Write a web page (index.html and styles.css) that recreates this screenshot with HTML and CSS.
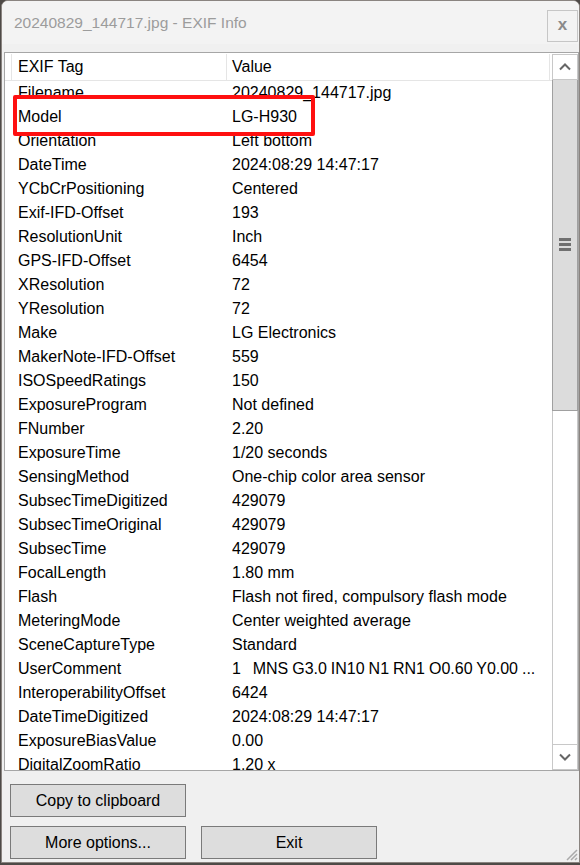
FILE: index.html
```html
<!DOCTYPE html>
<html>
<head>
<meta charset="utf-8">
<link rel="stylesheet" href="styles.css">
</head>
<body>
<div class="window">
  <div class="titlebar">
    <div class="title">20240829_144717.jpg - EXIF Info</div>
    <div class="close">x</div>
  </div>
  <div class="content">
    <div class="list">
      <div class="listmain">
        <div class="header">
          <div class="hc tag">EXIF Tag</div>
          <div class="hc val">Value</div>
          <div class="hc rest"></div>
        </div>
        <div class="rows">
          <div class="row"><span class="c1">Filename</span><span class="c2">20240829_144717.jpg</span></div>
          <div class="row"><span class="c1">Model</span><span class="c2">LG-H930</span></div>
          <div class="row"><span class="c1">Orientation</span><span class="c2">Left bottom</span></div>
          <div class="row"><span class="c1">DateTime</span><span class="c2">2024:08:29 14:47:17</span></div>
          <div class="row"><span class="c1">YCbCrPositioning</span><span class="c2">Centered</span></div>
          <div class="row"><span class="c1">Exif-IFD-Offset</span><span class="c2">193</span></div>
          <div class="row"><span class="c1">ResolutionUnit</span><span class="c2">Inch</span></div>
          <div class="row"><span class="c1">GPS-IFD-Offset</span><span class="c2">6454</span></div>
          <div class="row"><span class="c1">XResolution</span><span class="c2">72</span></div>
          <div class="row"><span class="c1">YResolution</span><span class="c2">72</span></div>
          <div class="row"><span class="c1">Make</span><span class="c2">LG Electronics</span></div>
          <div class="row"><span class="c1">MakerNote-IFD-Offset</span><span class="c2">559</span></div>
          <div class="row"><span class="c1">ISOSpeedRatings</span><span class="c2">150</span></div>
          <div class="row"><span class="c1">ExposureProgram</span><span class="c2">Not defined</span></div>
          <div class="row"><span class="c1">FNumber</span><span class="c2">2.20</span></div>
          <div class="row"><span class="c1">ExposureTime</span><span class="c2">1/20 seconds</span></div>
          <div class="row"><span class="c1">SensingMethod</span><span class="c2">One-chip color area sensor</span></div>
          <div class="row"><span class="c1">SubsecTimeDigitized</span><span class="c2">429079</span></div>
          <div class="row"><span class="c1">SubsecTimeOriginal</span><span class="c2">429079</span></div>
          <div class="row"><span class="c1">SubsecTime</span><span class="c2">429079</span></div>
          <div class="row"><span class="c1">FocalLength</span><span class="c2">1.80 mm</span></div>
          <div class="row"><span class="c1">Flash</span><span class="c2">Flash not fired, compulsory flash mode</span></div>
          <div class="row"><span class="c1">MeteringMode</span><span class="c2">Center weighted average</span></div>
          <div class="row"><span class="c1">SceneCaptureType</span><span class="c2">Standard</span></div>
          <div class="row"><span class="c1">UserComment</span><span class="c2 pre">1   MNS G3.0 IN10 N1 RN1 O0.60 Y0.00 ...</span></div>
          <div class="row"><span class="c1">InteroperabilityOffset</span><span class="c2">6424</span></div>
          <div class="row"><span class="c1">DateTimeDigitized</span><span class="c2">2024:08:29 14:47:17</span></div>
          <div class="row"><span class="c1">ExposureBiasValue</span><span class="c2">0.00</span></div>
          <div class="row"><span class="c1">DigitalZoomRatio</span><span class="c2">1.20 x</span></div>
        </div>
        <div class="highlight"></div>
      </div>
      <div class="scrollbar">
        <div class="sbtn up">
          <svg width="14" height="10" viewBox="0 0 14 10"><path d="M2 7.5 L7 2.5 L12 7.5" fill="none" stroke="#666" stroke-width="2"/></svg>
        </div>
        <div class="thumb">
          <div class="grip"><i></i><i></i><i></i></div>
        </div>
        <div class="track"></div>
        <div class="sbtn down">
          <svg width="14" height="10" viewBox="0 0 14 10"><path d="M2 2.5 L7 7.5 L12 2.5" fill="none" stroke="#666" stroke-width="2"/></svg>
        </div>
      </div>
    </div>
    <div class="buttons">
      <div class="btnrow">
        <div class="btn">Copy to clipboard</div>
      </div>
      <div class="btnrow">
        <div class="btn">More options...</div>
        <div class="btn">Exit</div>
      </div>
    </div>
    <svg class="grip-corner" width="14" height="14" viewBox="0 0 14 14">
      <path d="M13 3 L3 13 M13 7 L7 13 M13 11 L11 13" stroke="#aaa" stroke-width="1.5"/>
    </svg>
  </div>
</div>
</body>
</html>
```

FILE: styles.css
```css
html, body {
  margin: 0;
  padding: 0;
}
body {
  width: 580px;
  height: 865px;
  background: #4e4a47;
  font-family: "Liberation Sans", Arial, sans-serif;
  overflow: hidden;
}
.window {
  position: relative;
  box-sizing: border-box;
  width: 579px;
  height: 863px;
  margin-left: 1px;
  background: #f0f0f0;
  border: 1px solid #8a8480;
  border-radius: 7px 7px 0 0;
  display: flex;
  flex-direction: column;
  overflow: hidden;
}
.titlebar {
  height: 43px;
  flex: none;
  background: #f3f3f3;
  display: flex;
  align-items: flex-start;
  justify-content: space-between;
}
.title {
  margin: 11px 0 0 12px;
  font-size: 15.5px;
  color: #9c9c9c;
  line-height: 22px;
}
.close {
  box-sizing: border-box;
  width: 31px;
  height: 32px;
  margin: 9px 1px 0 0;
  border: 1px solid #c6c6c6;
  color: #8a8a8a;
  font-size: 17px;
  font-weight: bold;
  display: flex;
  align-items: center;
  justify-content: center;
  padding-bottom: 2px;
}
.content {
  position: relative;
  flex: 1;
  display: flex;
  flex-direction: column;
  padding: 8px 0 0 2px;
}
.list {
  box-sizing: border-box;
  width: 575px;
  height: 719px;
  border: 1px solid #a6a6a6;
  background: #fff;
  display: flex;
  overflow: hidden;
}
.listmain {
  position: relative;
  flex: 1;
  overflow: hidden;
}
.header {
  display: flex;
  height: 26px;
  margin-top: 1px;
  border-bottom: 1px solid #e5e5e5;
  font-size: 16px;
  color: #000;
}
.hc {
  box-sizing: border-box;
  display: flex;
  align-items: center;
}
.tag {
  width: 216px;
  border-left: 1px solid #e5e5e5;
  margin-left: 6px;
  padding-left: 6px;
  border-right: 1px solid #e5e5e5;
}
.val {
  width: 323px;
  padding-left: 5px;
  border-right: 1px solid #e5e5e5;
}
.rest {
  flex: 1;
}
.rows {
  font-size: 16px;
  color: #000;
}
.row {
  display: flex;
  height: 24px;
  align-items: center;
  white-space: nowrap;
}
.c1 {
  width: 227px;
  padding-left: 13px;
  box-sizing: border-box;
}
.pre {
  white-space: pre;
  word-spacing: -0.5px;
}
.highlight {
  position: absolute;
  left: 8px;
  top: 42px;
  width: 302px;
  height: 41px;
  box-sizing: border-box;
  border: 4px solid #ff1010;
  border-radius: 2px;
}
.scrollbar {
  width: 26px;
  flex: none;
  display: flex;
  flex-direction: column;
  box-sizing: border-box;
  padding-top: 1px;
}
.sbtn {
  box-sizing: border-box;
  height: 26px;
  border: 1px solid #c8c8c8;
  background: #fff;
  display: flex;
  align-items: center;
  justify-content: center;
}
.thumb {
  box-sizing: border-box;
  height: 331px;
  background: #dcdcdc;
  border: 1px solid #a0a0a0;
  border-top: none;
  display: flex;
  justify-content: center;
  padding-top: 158px;
}
.grip {
  width: 12px;
  display: flex;
  flex-direction: column;
  gap: 2px;
}
.grip i {
  display: block;
  height: 3px;
  background: #707070;
}
.track {
  flex: 1;
  box-sizing: border-box;
  border-left: 1px solid #c8c8c8;
  border-right: 1px solid #c8c8c8;
  background: #fff;
}
.buttons {
  display: flex;
  flex-direction: column;
  gap: 9px;
  padding: 13px 0 0 6px;
}
.btnrow {
  display: flex;
  gap: 15px;
}
.btn {
  box-sizing: border-box;
  width: 176px;
  height: 33px;
  background: #dddddd;
  border: 1px solid #7a7a7a;
  font-size: 16px;
  color: #000;
  display: flex;
  align-items: center;
  justify-content: center;
}
.grip-corner {
  position: absolute;
  right: 1px;
  bottom: 1px;
}
```
